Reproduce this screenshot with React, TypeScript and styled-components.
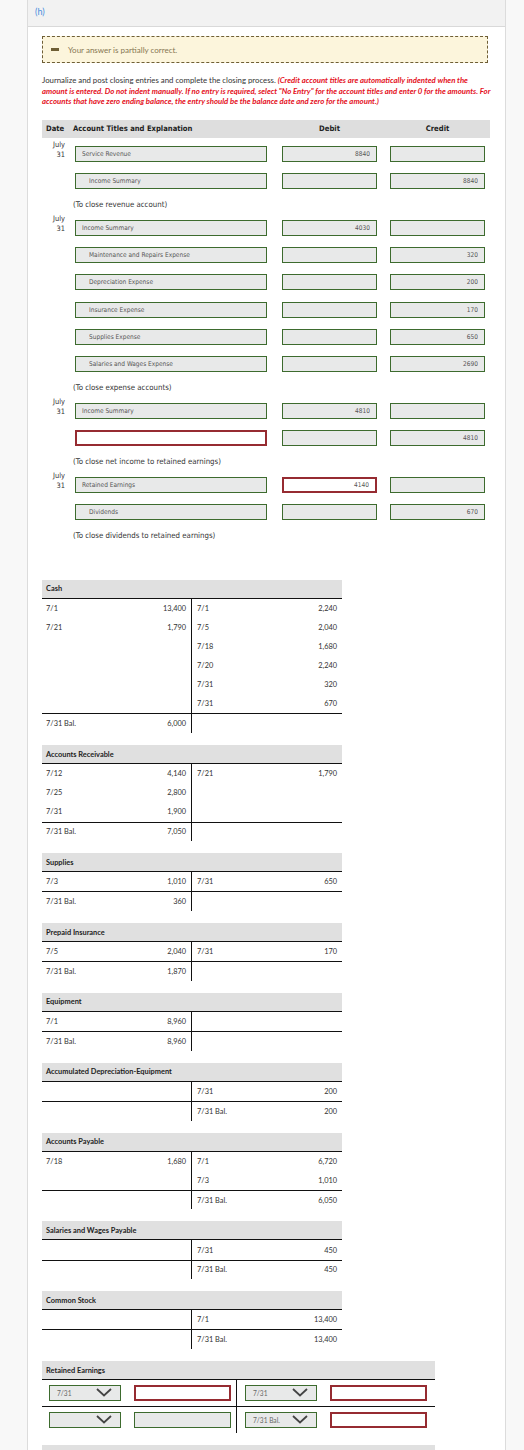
import React from "react";
import styled, { createGlobalStyle } from "styled-components";

const GlobalStyle = createGlobalStyle`
  html, body { margin: 0; padding: 0; background: #f8f8f8; }
  body { font-family: "Lato", "Noto Sans", sans-serif; color: #333; }
  * { box-sizing: border-box; }
`;

const Panel = styled.div`
  margin-left: 27px;
  width: 479px;
  min-height: 1450px;
  background: #fff;
  border-left: 1px solid #dcdcdc;
  border-right: 1px solid #dcdcdc;
`;

const PanelHeader = styled.div`
  height: 27px;
  background: #f2f2f2;
  border-bottom: 1px solid #d9d9d9;
  padding-left: 7px;
  line-height: 24px;
  font-size: 9px;
  color: #4a8de0;
`;

const PanelBody = styled.div`
  padding: 9px 16px 0 14px;
`;

const Feedback = styled.div`
  height: 27px;
  width: 446px;
  display: flex;
  align-items: center;
  gap: 9px;
  padding-left: 8px;
  background: #fcf5dc;
  border: 1px dashed #6e5e35;
  font-size: 8px;
  color: #857652;
`;

const MinusIcon = styled.span`
  display: block;
  width: 8px;
  height: 2.5px;
  background: #6e5e35;
`;

const Instructions = styled.p`
  margin: 12px 0 0;
  font-size: 7.8px;
  line-height: 10.5px;
  color: #333;
  white-space: nowrap;
`;

const Hint = styled.em`
  color: #e4101c;
  font-weight: 700;
`;

/* journal */

const journalFont = `"DejaVu Sans Condensed", "Noto Sans", sans-serif`;

const Journal = styled.div`
  margin-top: 13px;
  width: 448px;
  font-family: ${journalFont};
`;

const JournalGrid = styled.div`
  display: grid;
  grid-template-columns: 33px 192px 110px 108px;
  padding-right: 5px;
`;

const JournalHead = styled(JournalGrid)`
  height: 18px;
  align-items: center;
  background: #dedede;
  font-size: 7.6px;
  font-weight: 700;
  color: #222;
`;

const HeadCell = styled.div<{ $amount?: boolean; $shift?: number }>`
  white-space: nowrap;
  margin-left: ${(p) => p.$shift ?? 0}px;
  ${(p) =>
    p.$amount &&
    `
    justify-self: end;
    width: 95px;
    text-align: center;
  `}
`;

const JournalBody = styled.div`
  padding-top: 2.5px;
`;

const JournalRow = styled(JournalGrid)`
  height: 27.3px;
  align-items: center;
`;

const DateText = styled.div`
  align-self: start;
  padding-top: 0;
  padding-right: 10px;
  text-align: right;
  font-size: 7.4px;
  line-height: 10px;
  color: #333;
`;

const Explanation = styled.div`
  height: 19.5px;
  display: flex;
  align-items: center;
  padding-left: 31px;
  font-size: 7.8px;
  color: #333;
`;

const Field = styled.input<{ $wrong?: boolean; $indent?: boolean; $amount?: boolean }>`
  display: block;
  width: 100%;
  height: 16px;
  margin: 0;
  padding: 0 6px 0 ${(p) => (p.$amount ? 6 : p.$indent ? 13 : 6)}px;
  border: ${(p) => (p.$wrong ? "2px solid #962b31" : "1px solid #3d6b2e")};
  background: ${(p) => (p.$wrong ? "#fff" : "#e8e9e9")};
  border-radius: 0;
  font-family: ${journalFont};
  font-size: 6.5px;
  color: #555;
  text-align: ${(p) => (p.$amount ? "right" : "left")};
  outline: none;
`;

const AmountField = styled(Field)`
  justify-self: end;
  width: 95px;
`;

type Line = {
  account: string;
  indent?: boolean;
  debit?: string;
  credit?: string;
  wrongAccount?: boolean;
  wrongDebit?: boolean;
};

type Entry = { lines: Line[]; note: string };

const entries: Entry[] = [
  {
    lines: [
      { account: "Service Revenue", debit: "8840" },
      { account: "Income Summary", indent: true, credit: "8840" },
    ],
    note: "(To close revenue account)",
  },
  {
    lines: [
      { account: "Income Summary", debit: "4030" },
      { account: "Maintenance and Repairs Expense", indent: true, credit: "320" },
      { account: "Depreciation Expense", indent: true, credit: "200" },
      { account: "Insurance Expense", indent: true, credit: "170" },
      { account: "Supplies Expense", indent: true, credit: "650" },
      { account: "Salaries and Wages Expense", indent: true, credit: "2690" },
    ],
    note: "(To close expense accounts)",
  },
  {
    lines: [
      { account: "Income Summary", debit: "4810" },
      { account: "", wrongAccount: true, credit: "4810" },
    ],
    note: "(To close net income to retained earnings)",
  },
  {
    lines: [
      { account: "Retained Earnings", debit: "4140", wrongDebit: true },
      { account: "Dividends", indent: true, credit: "670" },
    ],
    note: "(To close dividends to retained earnings)",
  },
];

function JournalEntry({ entry }: { entry: Entry }) {
  return (
    <div>
      {entry.lines.map((l, i) => (
        <JournalRow key={i}>
          {i === 0 ? (
            <DateText>
              July
              <br />
              31
            </DateText>
          ) : (
            <div />
          )}
          <Field readOnly value={l.account} $indent={l.indent} $wrong={l.wrongAccount} />
          <AmountField readOnly value={l.debit ?? ""} $amount $wrong={l.wrongDebit} />
          <AmountField readOnly value={l.credit ?? ""} $amount />
        </JournalRow>
      ))}
      <Explanation>{entry.note}</Explanation>
    </div>
  );
}

/* T accounts */

const Ledger = styled.div`
  margin-top: 34px;
`;

const TBox = styled.div<{ $wide?: boolean }>`
  width: ${(p) => (p.$wide ? 393 : 300)}px;
  margin-bottom: 12px;
  font-size: 7.4px;
  color: #333;
`;

const THead = styled.div`
  height: 18px;
  display: flex;
  align-items: center;
  padding-left: 4px;
  background: #e0e0e0;
  font-weight: 700;
  color: #222;
`;

const TSection = styled.div`
  display: grid;
  grid-template-columns: 150px 150px;
  border-top: 1.5px solid #111;
`;

const TSide = styled.div<{ $left?: boolean }>`
  border-right: ${(p) => (p.$left ? "1.5px solid #111" : "none")};
  padding: ${(p) => (p.$left ? "0 5px 0 4px" : "0 5px 0 5px")};
`;

const TLine = styled.div<{ $bal?: boolean }>`
  height: ${(p) => (p.$bal ? 18.7 : 19.15)}px;
  display: flex;
  align-items: center;
  justify-content: space-between;
`;

type Post = [string, string];

interface TAccountProps {
  title: string;
  left?: Post[];
  right?: Post[];
  balLeft?: string;
  balRight?: string;
}

function TAccount({ title, left = [], right = [], balLeft, balRight }: TAccountProps) {
  return (
    <TBox>
      <THead>{title}</THead>
      <TSection>
        <TSide $left>
          {left.map(([d, a], i) => (
            <TLine key={i}>
              <span>{d}</span>
              <span>{a}</span>
            </TLine>
          ))}
        </TSide>
        <TSide>
          {right.map(([d, a], i) => (
            <TLine key={i}>
              <span>{d}</span>
              <span>{a}</span>
            </TLine>
          ))}
        </TSide>
      </TSection>
      <TSection>
        <TSide $left>
          <TLine $bal>
            {balLeft && (
              <>
                <span>7/31 Bal.</span>
                <span>{balLeft}</span>
              </>
            )}
          </TLine>
        </TSide>
        <TSide>
          <TLine $bal>
            {balRight && (
              <>
                <span>7/31 Bal.</span>
                <span>{balRight}</span>
              </>
            )}
          </TLine>
        </TSide>
      </TSection>
    </TBox>
  );
}

const InputRow = styled.div`
  display: grid;
  grid-template-columns: 195px 196px;
  height: 27px;
  border-top: 1.5px solid #111;
`;

const InputCell = styled.div<{ $left?: boolean }>`
  display: flex;
  align-items: center;
  gap: 13px;
  padding-left: ${(p) => (p.$left ? 7 : 8)}px;
  padding-bottom: 1px;
  border-right: ${(p) => (p.$left ? "1.5px solid #111" : "none")};
`;

const SelectBox = styled.div`
  width: 72px;
  height: 16px;
  flex: none;
  display: flex;
  align-items: center;
  justify-content: space-between;
  padding: 0 8px 0 7px;
  border: 1px solid #3d6b2e;
  background: #e8e9e9;
  font-size: 6.6px;
  color: #666;
`;

const AmountBox = styled(Field)`
  width: 97px;
  flex: none;
`;

function Select({ value }: { value: string }) {
  return (
    <SelectBox>
      <span>{value}</span>
      <svg width="16" height="9" viewBox="0 0 16 9">
        <polyline points="1,1 8,7.5 15,1" fill="none" stroke="#444" strokeWidth="1.8" />
      </svg>
    </SelectBox>
  );
}

function RetainedEarnings() {
  return (
    <TBox $wide>
      <THead>Retained Earnings</THead>
      <InputRow>
        <InputCell $left>
          <Select value="7/31" />
          <AmountBox readOnly value="" $amount $wrong />
        </InputCell>
        <InputCell>
          <Select value="7/31" />
          <AmountBox readOnly value="" $amount $wrong />
        </InputCell>
      </InputRow>
      <InputRow>
        <InputCell $left>
          <Select value="" />
          <AmountBox readOnly value="" $amount />
        </InputCell>
        <InputCell>
          <Select value="7/31 Bal." />
          <AmountBox readOnly value="" $amount $wrong />
        </InputCell>
      </InputRow>
    </TBox>
  );
}

export default function App() {
  return (
    <>
      <GlobalStyle />
      <Panel>
        <PanelHeader>(h)</PanelHeader>
        <PanelBody>
          <Feedback>
            <MinusIcon />
            Your answer is partially correct.
          </Feedback>
          <Instructions>
            Journalize and post closing entries and complete the closing process.{" "}
            <Hint>
              (Credit account titles are automatically indented when the
              <br />
              amount is entered. Do not indent manually. If no entry is required, select "No Entry" for
              the account titles and enter 0 for the amounts. For
              <br />
              accounts that have zero ending balance, the entry should be the balance date and zero for
              the amount.)
            </Hint>
          </Instructions>

          <Journal>
            <JournalHead>
              <HeadCell $shift={4}>Date</HeadCell>
              <HeadCell $shift={-2}>Account Titles and Explanation</HeadCell>
              <HeadCell $amount>Debit</HeadCell>
              <HeadCell $amount>Credit</HeadCell>
            </JournalHead>
            <JournalBody>
              {entries.map((e, i) => (
                <JournalEntry key={i} entry={e} />
              ))}
            </JournalBody>
          </Journal>

          <Ledger>
            <TAccount
              title="Cash"
              left={[
                ["7/1", "13,400"],
                ["7/21", "1,790"],
              ]}
              right={[
                ["7/1", "2,240"],
                ["7/5", "2,040"],
                ["7/18", "1,680"],
                ["7/20", "2,240"],
                ["7/31", "320"],
                ["7/31", "670"],
              ]}
              balLeft="6,000"
            />
            <TAccount
              title="Accounts Receivable"
              left={[
                ["7/12", "4,140"],
                ["7/25", "2,800"],
                ["7/31", "1,900"],
              ]}
              right={[["7/21", "1,790"]]}
              balLeft="7,050"
            />
            <TAccount title="Supplies" left={[["7/3", "1,010"]]} right={[["7/31", "650"]]} balLeft="360" />
            <TAccount
              title="Prepaid Insurance"
              left={[["7/5", "2,040"]]}
              right={[["7/31", "170"]]}
              balLeft="1,870"
            />
            <TAccount title="Equipment" left={[["7/1", "8,960"]]} balLeft="8,960" />
            <TAccount title="Accumulated Depreciation-Equipment" right={[["7/31", "200"]]} balRight="200" />
            <TAccount
              title="Accounts Payable"
              left={[["7/18", "1,680"]]}
              right={[
                ["7/1", "6,720"],
                ["7/3", "1,010"],
              ]}
              balRight="6,050"
            />
            <TAccount title="Salaries and Wages Payable" right={[["7/31", "450"]]} balRight="450" />
            <TAccount title="Common Stock" right={[["7/1", "13,400"]]} balRight="13,400" />
            <RetainedEarnings />
            <TBox $wide>
              <THead />
            </TBox>
          </Ledger>
        </PanelBody>
      </Panel>
    </>
  );
}
